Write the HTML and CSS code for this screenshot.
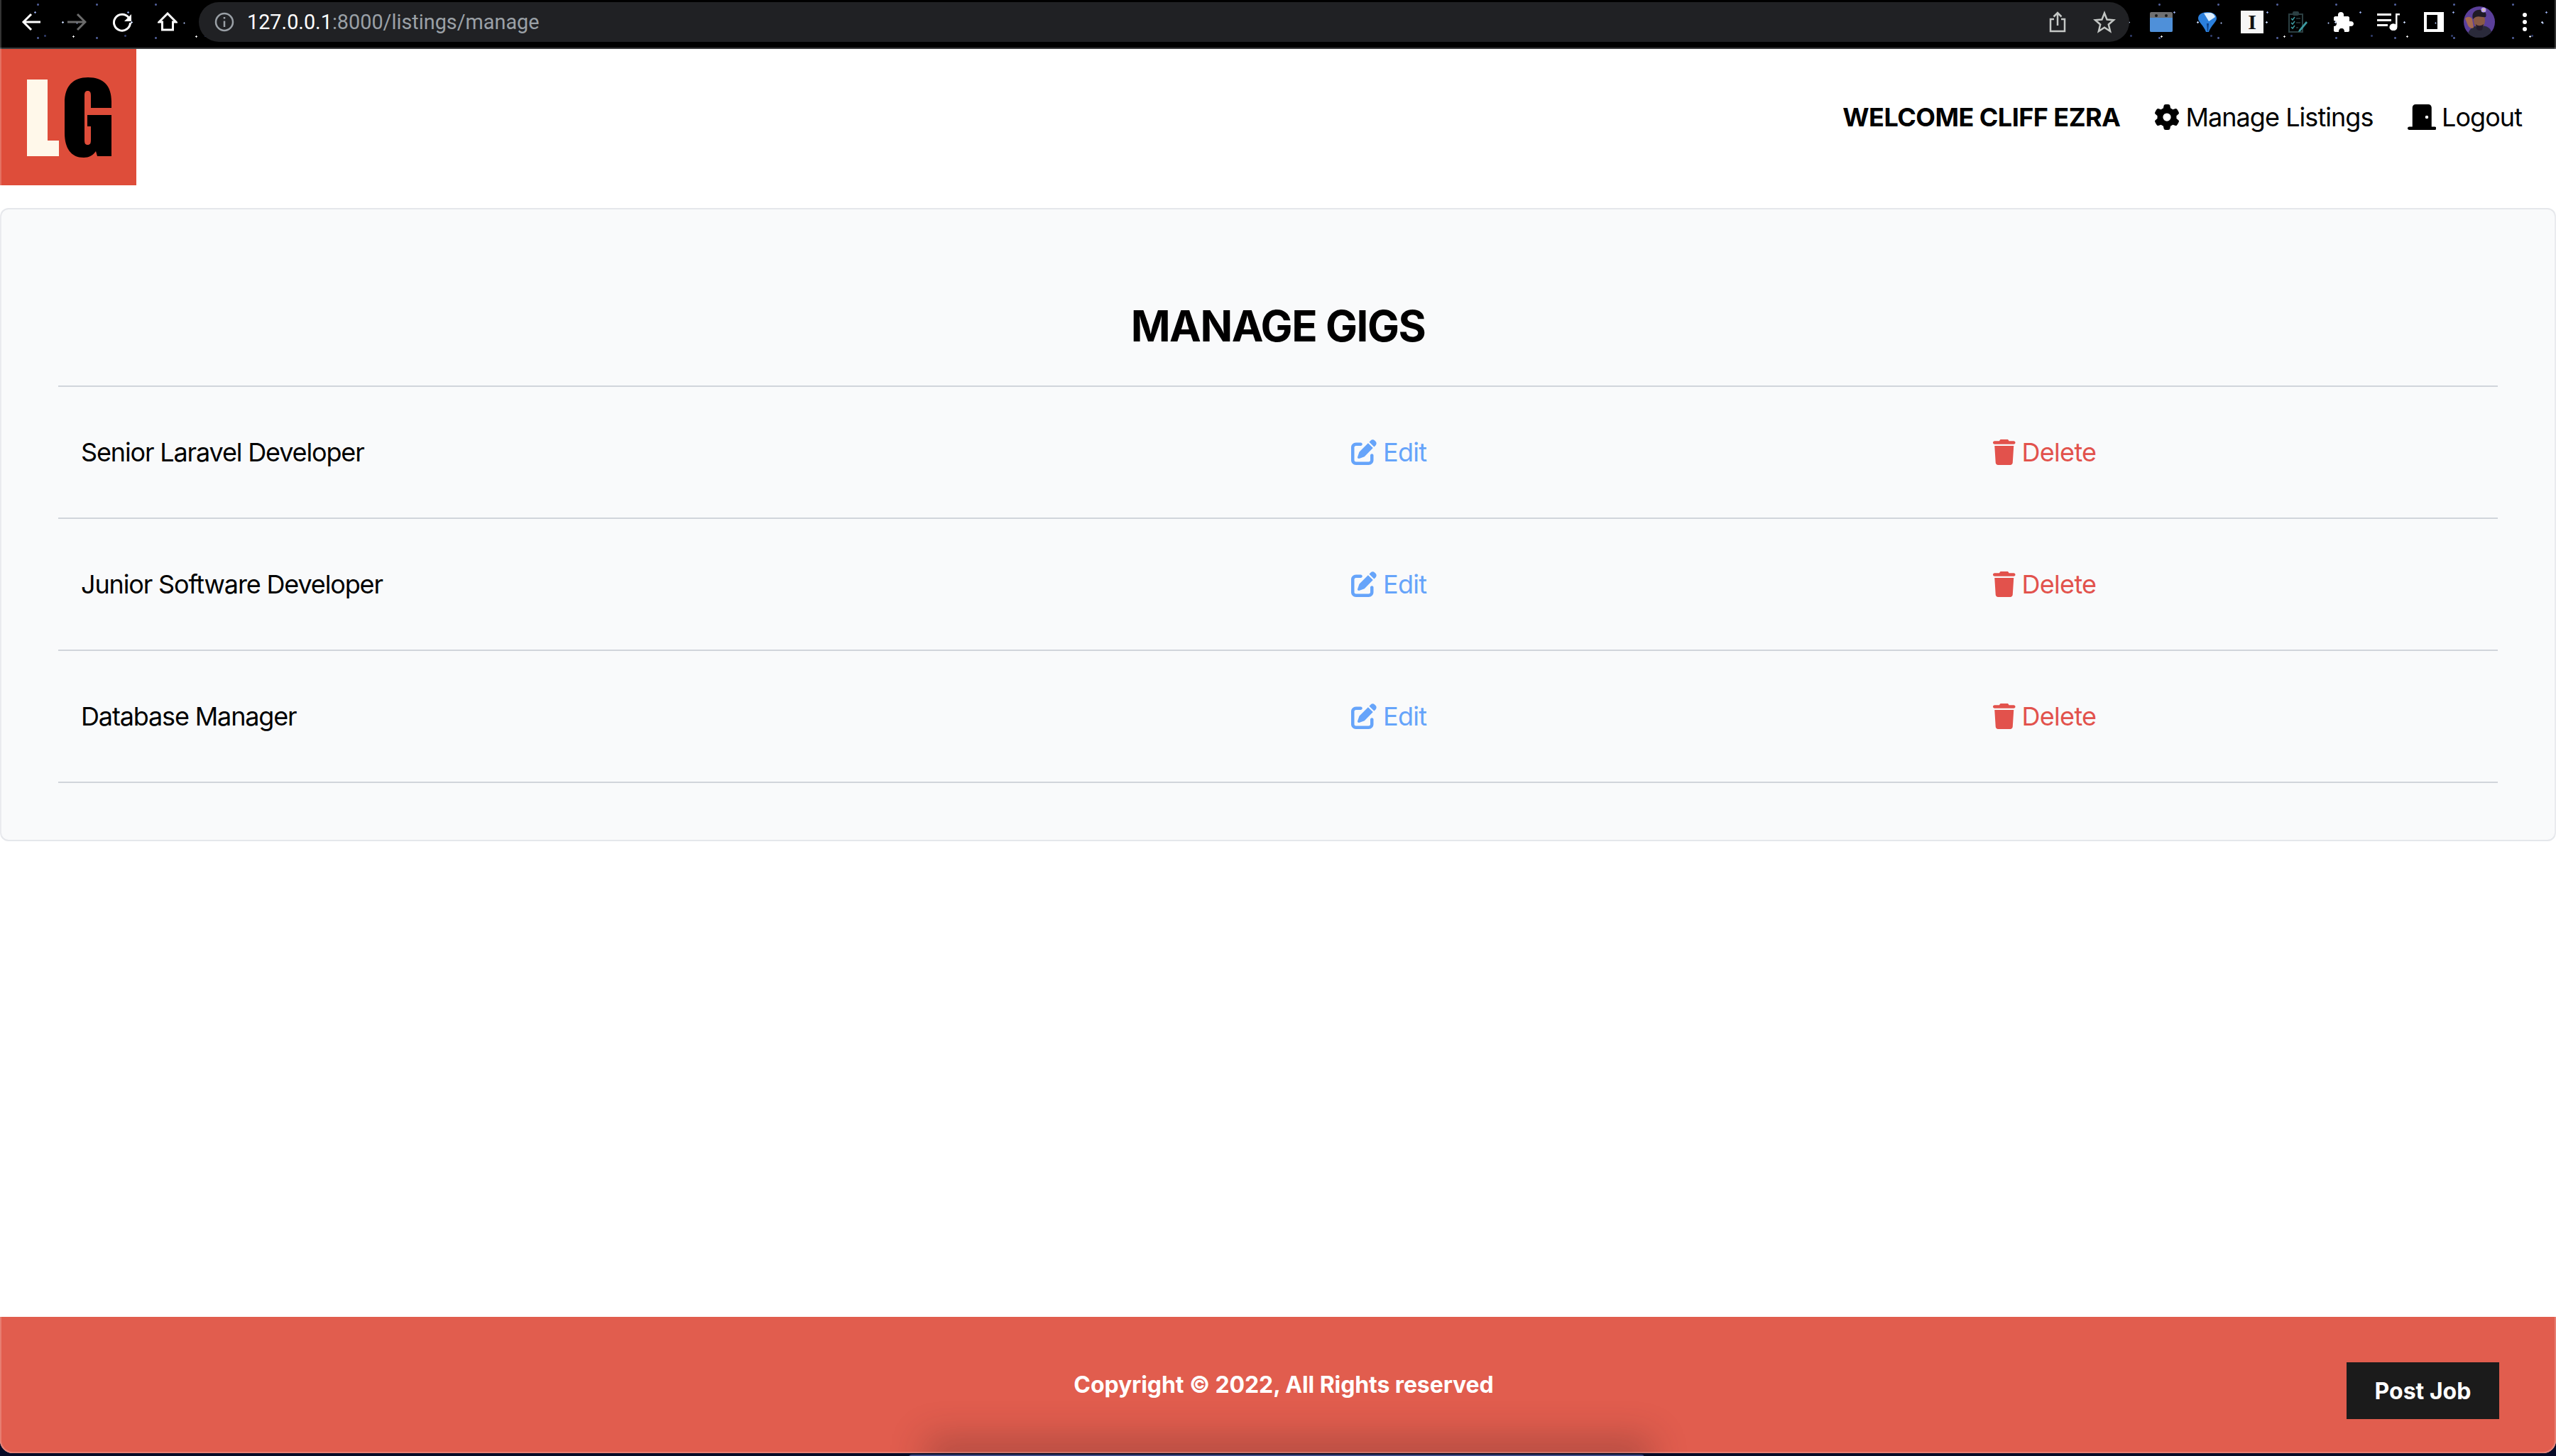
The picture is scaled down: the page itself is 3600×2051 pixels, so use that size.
FILE: index.html
```html
<!DOCTYPE html>
<html lang="en">
<head>
<meta charset="utf-8">
<title>Manage Gigs</title>
<link rel="stylesheet" href="styles.css">
</head>
<body>
<div class="window">
  <div class="toolbar">
    <div class="nav-icons">
      <svg class="tb-icon back" viewBox="0 0 28 28"><path d="M27 14H3M14 3 3 14l11 11" /></svg>
      <svg class="tb-icon forward" viewBox="0 0 28 28"><path d="M1 14h25M15 3l11 11-11 11" /></svg>
      <svg class="tb-icon reload" viewBox="0 0 28 28"><path d="M23 7.500A11.500 11.500 0 1 0 25.500 15" /><path class="solid" d="M27 3v10H17z" /></svg>
      <svg class="tb-icon home" viewBox="0 0 28 28"><path d="M14 2 2 14h4.500v11h15V14H26z" /></svg>
    </div>
    <div class="omnibox">
      <svg class="info" viewBox="0 0 28 28"><circle cx="14" cy="14" r="12" /><path d="M14 12.500V21M14 7v2.500" /></svg>
      <span class="url"><span class="host">127.0.0.1</span>:8000/listings/manage</span>
      <svg class="box-icon share" viewBox="0 0 24 30"><path d="M7 11H2v17h20V11h-5M12 20V2M6.500 7.500 12 2l5.500 5.500" /></svg>
      <svg class="box-icon star" viewBox="0 0 32 32"><path d="M16 3.500 19.600 12.600 29 13.200 21.800 19.500 24.100 29 16 23.800 7.900 29 10.200 19.500 3 13.200 12.400 12.600z" /></svg>
    </div>
    <div class="extensions">
      <svg class="ext cal" viewBox="0 0 32 28"><rect width="32" height="28" rx="2" fill="#6f7072" /><path d="M0 8h32v18a2 2 0 0 1-2 2H2a2 2 0 0 1-2-2z" fill="#4f90d9" /><circle cx="9" cy="5" r="2" fill="#1c1c1c" /><circle cx="23" cy="5" r="2" fill="#1c1c1c" /></svg>
      <svg class="ext gem" viewBox="0 0 26 28"><path d="M13 0C5 0 0 3.500 0 9c0 5 8 10 11 19h4c3-9 11-14 11-19 0-5.500-5-9-13-9z" fill="#2a7fdc" /><path d="M8 1.500 18 1c3 1 5 3 6 6l-9 6z" fill="#dcefff" /><path d="M12 16h3l-1 11h-1z" fill="#0c3f86" /></svg>
      <div class="ext instapaper"><span>I</span></div>
      <svg class="ext clip" viewBox="0 0 28 30"><path d="M2 4h19v25H2z" fill="none" stroke="#2b3f42" stroke-width="2" /><rect x="7" y="0" width="9" height="6" rx="2" fill="#2b3f42" /><path d="M5 10l2 2 3-4M5 16l2 2 3-4M5 22l2 2 3-4" fill="none" stroke="#3c9aa0" stroke-width="1.500" /><path d="M12 10h6M12 16h6M12 23h3" stroke="#2b3f42" stroke-width="1.500" /><path d="M16 26 26 14l2 2-10 12-3 1z" fill="#3c9aa0" /></svg>
      <svg class="ext puzzle" viewBox="0 0 29 28"><path d="M11 0c3 0 4 2 4 3.500V6h6c1 0 2 1 2 2v5h2c2 0 4 1 4 3.500S27 20 25 20h-2v6c0 1-1 2-2 2h-5c0-3-1-5-4-5s-4 2-4 5H3c-1 0-2-1-2-2v-6c2 0 4-1 4-4s-2-4-4-4V8c0-1 1-2 2-2h4V3.500C7 2 8 0 11 0z" /></svg>
      <svg class="ext media" viewBox="0 0 32 24"><path d="M0 0h20v3H0zM0 8h20v3H0zM0 15h15v3H0zM26 0h6v2.500h-3.500V19h-.1A5.500 5 0 1 1 26 15.200z" /></svg>
      <div class="ext sidepanel"></div>
      <svg class="ext avatar" viewBox="0 0 44 44"><circle cx="22" cy="22" r="22" fill="#5b3f9a" /><path d="M6 38c3-8 9-11 18-11s14 4 15 9a22 22 0 0 1-33 2z" fill="#2a2a3a" /><ellipse cx="22" cy="20" rx="8" ry="11" fill="#8a5a45" /><path d="M13 18C10 8 18 4 24 5s9 5 7 10c-6 1-12-4-18 3z" fill="#1f1a26" /><path d="M17 25c3 3 7 3 11 0l-2 8c-3 2-6 1-8-1z" fill="#241b2c" /><path d="M2 17c3-3 8-3 10 1l2 12c-3 2-6 0-8-3z" fill="#a56a4f" /><circle cx="28" cy="5" r="3.500" fill="#b9a0ea" /><circle cx="28" cy="5" r="1.200" fill="#e8d27a" /></svg>
      <svg class="ext kebab" viewBox="0 0 6 26"><circle cx="3" cy="3" r="3" /><circle cx="3" cy="13" r="3" /><circle cx="3" cy="23" r="3" /></svg>
    </div>
  </div>

  <div class="page">
    <nav class="topnav">
      <a class="logo" href="#" aria-label="LG">
        <svg viewBox="0 0 192 192"><path class="logo-l" d="M38 43h29v86h16v22H38z" /><path class="logo-g" d="M91 76C91 52 103 40 124 40C146 40 157 52 157 74V83H128V66C128 61 127 59 123.500 59C120 59 119 61 119 66V128C119 133 120 135 123.500 135C127 135 128 133 128 128V109H123V93H157V151H137L135 144C131 150 125 153 118 153C100 153 91 140 91 118Z" /></svg>
      </a>
      <ul class="nav-links">
        <li class="welcome">WELCOME CLIFF EZRA</li>
        <li><a class="nav-link" href="#"><svg class="fa" viewBox="0 0 512 512"><path d="M495.900 166.600c3.200 8.700.5 18.400-6.400 24.600l-43.300 39.400c1.100 8.300 1.700 16.800 1.700 25.400s-.6 17.100-1.700 25.400l43.300 39.400c6.900 6.200 9.600 15.900 6.400 24.600c-4.400 11.900-9.700 23.300-15.800 34.300l-4.700 8.100c-6.600 11-14 21.400-22.100 31.200c-5.900 7.200-15.700 9.600-24.500 6.800l-55.700-17.700c-13.400 10.300-28.200 18.900-44 25.400l-12.500 57.100c-2 9.100-9 16.300-18.200 17.800c-13.800 2.300-28 3.500-42.500 3.500s-28.700-1.200-42.500-3.500c-9.200-1.500-16.200-8.700-18.200-17.800l-12.500-57.100c-15.800-6.500-30.600-15.100-44-25.400L83.100 425.900c-8.800 2.800-18.600.3-24.500-6.800c-8.100-9.800-15.500-20.200-22.100-31.200l-4.700-8.100c-6.100-11-11.400-22.400-15.800-34.300c-3.200-8.700-.5-18.400 6.400-24.600l43.300-39.400C64.600 273.100 64 264.600 64 256s.6-17.100 1.700-25.400L22.400 191.200c-6.900-6.200-9.600-15.900-6.400-24.600c4.400-11.900 9.700-23.300 15.800-34.300l4.700-8.100c6.600-11 14-21.400 22.100-31.200c5.900-7.200 15.700-9.600 24.500-6.800l55.700 17.700c13.400-10.300 28.200-18.900 44-25.400l12.500-57.100c2-9.100 9-16.300 18.200-17.800C227.300 1.200 241.500 0 256 0s28.700 1.200 42.500 3.500c9.200 1.500 16.200 8.700 18.200 17.800l12.500 57.100c15.800 6.500 30.600 15.100 44 25.400l55.700-17.700c8.800-2.800 18.600-.3 24.500 6.800c8.100 9.800 15.500 20.200 22.100 31.200l4.700 8.100c6.100 11 11.400 22.400 15.800 34.300zM256 336a80 80 0 1 0 0-160 80 80 0 1 0 0 160z" /></svg>Manage Listings</a></li>
        <li><a class="nav-link" href="#"><svg class="fa door" viewBox="0 0 576 512"><path d="M96 64c0-35.300 28.700-64 64-64H416c35.300 0 64 28.700 64 64V448h64c17.700 0 32 14.300 32 32s-14.300 32-32 32H432 144 32c-17.700 0-32-14.300-32-32s14.300-32 32-32H96V64zM384 288a32 32 0 1 0 0-64 32 32 0 1 0 0 64z" /></svg>Logout</a></li>
      </ul>
    </nav>

    <main class="card">
      <header class="card-head"><h1>MANAGE GIGS</h1></header>
      <div class="gigs">
        <div class="gig">
          <div class="gig-title">Senior Laravel Developer</div>
          <a class="act edit" href="#"><svg class="fa" viewBox="0 0 512 512"><use href="#pen" /></svg>Edit</a>
          <a class="act del" href="#"><svg class="fa trash" viewBox="0 0 448 512"><use href="#bin" /></svg>Delete</a>
        </div>
        <div class="gig">
          <div class="gig-title">Junior Software Developer</div>
          <a class="act edit" href="#"><svg class="fa" viewBox="0 0 512 512"><use href="#pen" /></svg>Edit</a>
          <a class="act del" href="#"><svg class="fa trash" viewBox="0 0 448 512"><use href="#bin" /></svg>Delete</a>
        </div>
        <div class="gig">
          <div class="gig-title">Database Manager</div>
          <a class="act edit" href="#"><svg class="fa" viewBox="0 0 512 512"><use href="#pen" /></svg>Edit</a>
          <a class="act del" href="#"><svg class="fa trash" viewBox="0 0 448 512"><use href="#bin" /></svg>Delete</a>
        </div>
      </div>
    </main>

    <footer class="footer">
      <p class="copyright">Copyright &copy; 2022, All Rights reserved</p>
      <a class="post-job" href="#">Post Job</a>
    </footer>
  </div>
</div>
<div class="dock"></div>
<svg class="defs" aria-hidden="true">
  <defs>
    <path id="pen" d="M471.600 21.700c-21.900-21.900-57.300-21.900-79.200 0L362.300 51.700l97.900 97.900 30.100-30.100c21.900-21.900 21.900-57.300 0-79.200L471.600 21.700zm-299.200 220c-6.100 6.100-10.800 13.600-13.500 21.900l-29.600 88.800c-2.900 8.600-.6 18.100 5.800 24.600s15.900 8.700 24.600 5.800l88.800-29.600c8.200-2.700 15.700-7.400 21.900-13.500L437.700 172.300 339.700 74.300 172.400 241.700zM96 64C43 64 0 107 0 160V416c0 53 43 96 96 96H352c53 0 96-43 96-96V320c0-17.700-14.300-32-32-32s-32 14.300-32 32v96c0 17.700-14.300 32-32 32H96c-17.700 0-32-14.300-32-32V160c0-17.700 14.300-32 32-32h96c17.700 0 32-14.300 32-32s-14.300-32-32-32H96z" />
    <path id="bin" d="M135.200 17.700L128 32H32C14.300 32 0 46.300 0 64S14.300 96 32 96H416c17.700 0 32-14.300 32-32s-14.300-32-32-32H320l-7.200-14.300C307.400 6.800 296.300 0 284.200 0H163.800c-12.100 0-23.200 6.800-28.600 17.700zM416 128H32L53.200 467c1.600 25.300 22.600 45 47.900 45H346.900c25.300 0 46.300-19.700 47.900-45L416 128z" />
  </defs>
</svg>
</body>
</html>
```

FILE: styles.css
```css
* { box-sizing: border-box; }
html, body { margin: 0; height: 100%; }
body {
  position: relative;
  background: #060a26;
  font-family: Inter, "Liberation Sans", sans-serif;
  color: #000;
  overflow: hidden;
}
a { color: inherit; text-decoration: none; }
.defs { width: 0; height: 0; display: block; }

.window {
  position: relative;
  height: 2047px;
  display: flex;
  flex-direction: column;
  overflow: hidden;
  border-radius: 0 0 18px 18px;
}
.window::after {
  content: "";
  position: absolute;
  inset: 0;
  pointer-events: none;
  border: 2px solid rgba(255, 255, 255, .2);
  border-top: 0;
  border-radius: 0 0 18px 18px;
}

.dock {
  position: absolute;
  left: 1280px;
  top: 2049px;
  width: 1036px;
  height: 4px;
  border-radius: 6px 6px 0 0;
  background: #3f4a86;
}

.toolbar {
  height: 69px;
  flex: none;
  display: flex;
  align-items: center;
  padding-bottom: 6px;
  border-bottom: 2px solid #3a3b3d;
  background-color: #000;
  background-image:
    radial-gradient(circle, #c4d4f7 1px, transparent 1.500px),
    radial-gradient(circle, #8ea2dc 1px, transparent 1.500px),
    radial-gradient(circle, #fff 1px, transparent 1.400px),
    radial-gradient(circle, #4d5c96 1.200px, transparent 1.700px),
    radial-gradient(circle, #a9bdf0 .8px, transparent 1.300px),
    radial-gradient(circle, #2f3a68 1.200px, transparent 1.700px);
  background-size: 97px 53px, 131px 61px, 173px 67px, 83px 47px, 151px 41px, 113px 59px;
  background-position: 40px 5px, 115px 48px, 190px 18px, 12px 30px, 33px 12px, 7px 21px;
}
.nav-icons { display: flex; align-items: center; width: 280px; flex: none; padding-left: 30px; gap: 36px; }
.tb-icon { width: 28px; height: 28px; flex: none; fill: none; stroke: #fff; stroke-width: 3; }
.tb-icon.forward { stroke: #6b6b6b; }
.tb-icon .solid { fill: #fff; stroke: none; }
.omnibox {
  width: 2719px;
  height: 56px;
  flex: none;
  display: flex;
  align-items: center;
  padding-left: 22px;
  border-radius: 28px;
  background: #202124;
}
.info { width: 28px; height: 28px; flex: none; fill: none; stroke: #9aa0a6; stroke-width: 2.500; margin-right: 18px; }
.url { flex: 1; font-family: Roboto, sans-serif; font-size: 28.800px; color: #9aa0a6; white-space: nowrap; }
.host { color: #fff; }
.box-icon { flex: none; fill: none; stroke: #c4c7c5; stroke-width: 2.500; }
.share { width: 24px; height: 30px; margin-right: 38px; }
.star { width: 32px; height: 32px; margin-right: 19px; }
.extensions { flex: 1; display: flex; align-items: center; }
.ext { flex: none; display: block; }
.cal { width: 32px; height: 28px; margin-left: 29px; }
.gem { width: 26px; height: 28px; margin-left: 36px; }
.instapaper { width: 32px; height: 32px; margin-left: 34px; background: #f6f6f6; color: #111; font-family: "Liberation Serif", serif; font-weight: 700; font-size: 30px; line-height: 32px; text-align: center; }
.clip { width: 28px; height: 30px; margin-left: 34px; }
.puzzle { width: 29px; height: 28px; margin-left: 36px; fill: #fff; }
.media { width: 32px; height: 24px; margin-left: 33px; fill: #fff; }
.sidepanel { width: 28px; height: 28px; margin-left: 34px; border: 4px solid #fff; border-right-width: 9px; }
.avatar { width: 44px; height: 44px; margin-left: 28px; }
.kebab { width: 6px; height: 26px; margin-left: 39px; fill: #fff; }

.page { flex: 1; display: flex; flex-direction: column; background: #fff; min-height: 0; }

.topnav { display: flex; justify-content: space-between; align-items: center; flex: none; margin-bottom: 32px; padding-right: 48px; }
.logo { display: block; width: 192px; height: 192px; background: #de4d3a; }
.logo svg { display: block; width: 192px; height: 192px; }
.logo-l { fill: #fff8ea; }
.logo-g { fill: #000; }
.nav-links { display: flex; align-items: center; gap: 48px; list-style: none; margin: 0; padding: 0; font-size: 36px; line-height: 56px; }
.nav-link { display: flex; align-items: center; gap: 8px; letter-spacing: -.95px; }
.welcome { font-weight: 700; letter-spacing: -.55px; }
.fa { width: 36px; height: 36px; fill: currentColor; flex: none; display: block; }
.fa.door { width: 40.500px; }
.fa.trash { width: 31.500px; }

.card { flex: none; height: 892px; border: 2px solid #e5e7eb; border-radius: 12px; background: #f9fafb; padding: 80px; }
.card-head { padding: 48px 0; }
.card-head h1 { margin: 0; text-align: center; font-size: 60px; line-height: 72px; font-weight: 700; letter-spacing: -1.450px; }
.gigs { border-top: 2px solid #d1d5db; }
.gig {
  display: grid;
  grid-template-columns: 1789px 904px 1fr;
  align-items: center;
  height: 186px;
  border-bottom: 2px solid #d1d5db;
  font-size: 36px;
  line-height: 56px;
}
.gig-title { padding: 0 32px; letter-spacing: -1.150px; }
.act { display: flex; align-items: center; gap: 9px; padding: 0 32px; letter-spacing: -.7px; }
.edit { color: #66a4fa; }
.del { color: #e2524c; }

.footer {
  margin-top: auto;
  flex: none;
  height: 192px;
  position: relative;
  overflow: hidden;
  display: flex;
  align-items: center;
  justify-content: center;
  color: #fff;
  background-color: #e15d4e;
}
.footer::before {
  content: "";
  position: absolute;
  left: 1320px;
  top: 100%;
  width: 990px;
  height: 20px;
  box-shadow: 0 -6px 50px 16px rgba(70, 35, 35, .3);
}
.copyright { position: relative; margin: 0 0 0 16px; font-size: 32px; line-height: 40px; font-weight: 700; letter-spacing: -.1px; }
.post-job {
  position: absolute;
  right: 80px;
  top: 64px;
  width: 215px;
  height: 80px;
  display: flex;
  align-items: center;
  justify-content: center;
  background: #1b1b1b;
  font-size: 32px;
  font-weight: 700;
}
```
